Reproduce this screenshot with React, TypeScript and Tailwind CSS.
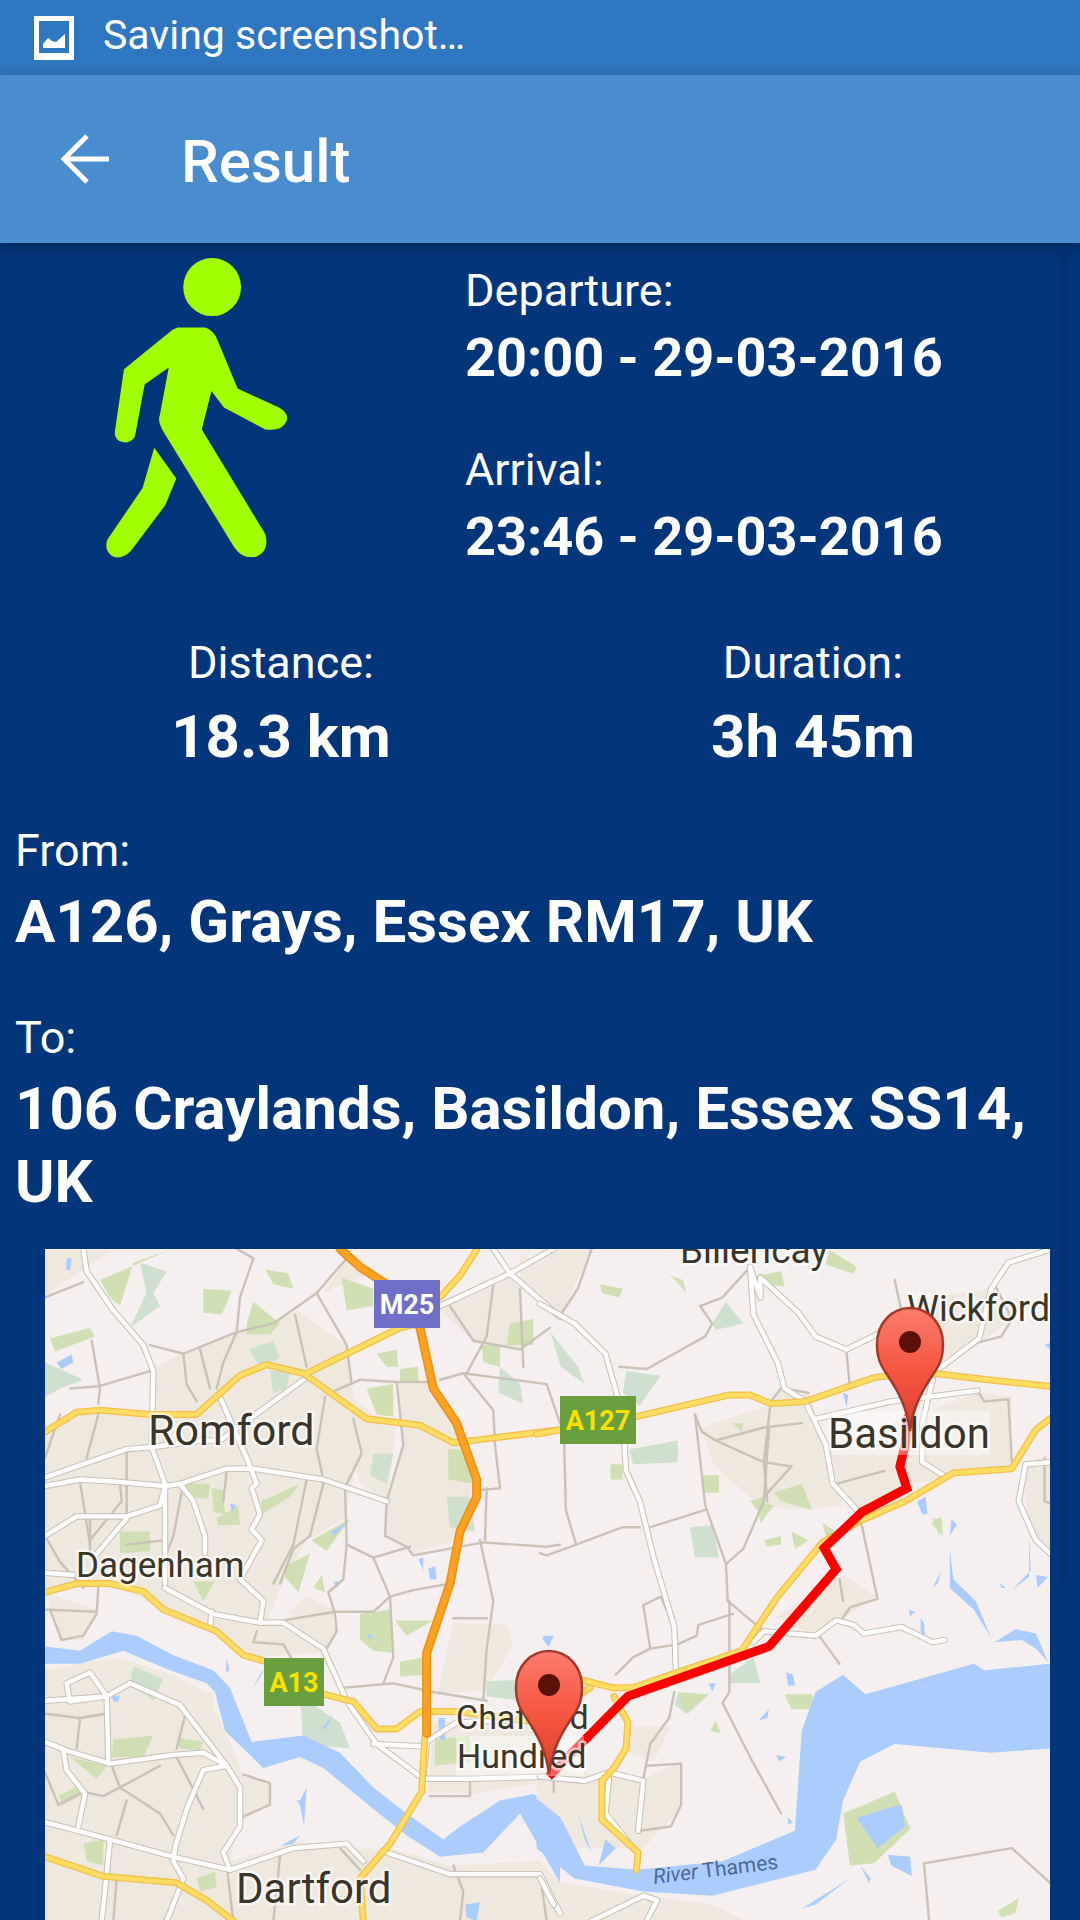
import React from "react";

const ROBOTO = { fontFamily: "Roboto, sans-serif" };

const A = "translate(40,1240) scale(0.33333,0.43368)";
const B = "translate(540,1240) scale(0.34439,0.43368)";

type Set = {
  tan: string[];
  pale: string[];
  green: string[];
  water: string[];
  minor: string[];
  white: string[];
  yellow: string[];
  orange: string[];
};

const setA: Set = {
  tan: [
    "15,125 220,20 15,20",
    "15,440 110,395 330,395 340,290 430,260 590,210 700,190 770,160 920,240 960,480 915,640 800,690 720,800 680,880 860,850 890,900 860,950 600,960 530,900 370,850 210,790 15,810",
    "15,990 230,960 400,1000 500,1040 560,1140 610,1230 690,1250 690,1300 600,1340 570,1430 770,1385 950,1400 1050,1400 1230,1440 1500,1430 1560,1480 1560,1568 15,1568",
    "1190,1045 1240,880 1400,885 1420,930 1340,1035",
    "1180,1110 1500,1100 1500,1250 1300,1275 1165,1270",
    "1035,680 1040,600 1090,470 1070,330 1170,330 1250,420 1300,560 1250,690 1120,720 1100,705",
    "1440,30 1560,80 1560,180 1440,110",
    "1200,160 1400,80 1440,110 1450,250 1300,230",
    "740,860 800,820 880,850 880,880",
    "385,1040 520,1040 520,1090 420,1080",
    "890,330 1000,400 1070,420 1040,600 960,560",
    "15,810 170,850 130,920 60,920",
    "930,30 1000,70 850,120",
  ],
  pale: [
    "300,50 380,70 340,120 360,150 270,200 320,120",
    "15,280 130,320 60,340 15,360",
    "625,250 700,230 720,270 660,290",
    "690,300 750,300 740,340 700,350",
    "1000,490 1060,490 1040,560 990,540",
    "1380,290 1440,330 1450,375 1375,350",
    "280,980 370,1010 340,1060 270,1020",
    "780,1050 900,1110 930,1170 790,1160",
    "1340,1015 1500,1010 1440,1060 1340,1050",
    "1220,590 1290,590 1305,670 1230,660",
  ],
  green: [
    "180,90 390,20 280,50 240,150 210,130",
    "30,225 150,200 165,220 45,255",
    "490,110 575,115 545,170 490,165",
    "620,190 640,140 720,190 690,215 620,215",
    "675,65 745,75 760,110 700,100",
    "905,85 1000,110 1000,150 920,160",
    "1010,260 1070,250 1075,290 1040,290",
    "980,340 1060,330 1060,405 1010,400",
    "1080,295 1135,290 1135,325 1080,325",
    "430,560 510,560 505,595 450,590",
    "515,570 550,575 555,630 520,625",
    "530,640 595,610 600,655 535,655",
    "665,600 780,560 750,590 665,630",
    "240,670 330,670 330,715 240,720",
    "460,785 525,785 490,830",
    "735,750 810,720 775,810 735,775",
    "820,800 845,770 855,810",
    "815,690 930,640 860,715",
    "960,860 1050,850 1060,950 1000,945 960,920",
    "1065,875 1180,875 1100,910",
    "1080,970 1150,960 1150,1000 1080,1005",
    "1185,1150 1290,1140 1290,1200 1185,1210",
    "1325,240 1380,240 1380,290 1330,280",
    "1225,480 1290,480 1300,560 1225,550",
    "1410,190 1480,180 1480,240 1400,240",
    "55,1280 105,1260 130,1275 70,1300",
    "130,1390 190,1380 190,1440 140,1430",
    "470,1470 525,1455 530,1490 480,1500",
    "90,1190 200,1210 170,1240",
    "220,1150 340,1140 310,1190 215,1190",
    "410,1145 490,1155 480,1175 420,1170",
  ],
  water: [
    "15,935 120,945 215,900 290,910 400,955 520,990 570,1030 635,1155 790,1140 900,1180 1000,1260 1100,1320 1210,1380 1260,1350 1380,1290 1480,1275 1560,1310 1560,1480 1500,1400 1440,1320 1330,1410 1200,1420 1100,1370 1000,1310 850,1215 780,1190 670,1215 555,1130 525,1040 500,1020 390,990 250,945 120,975 15,975",
    "80,40 95,40 90,68 78,65",
    "50,280 95,262 100,280 65,295",
    "570,605 590,610 575,625",
    "880,785 905,785 890,800",
    "875,670 930,645 880,680",
    "1135,735 1150,730 1150,760",
    "1165,755 1185,750 1190,780 1170,780",
    "980,905 1000,910 990,920",
    "1510,910 1540,910 1525,935",
    "1195,1100 1215,1100 1215,1150 1200,1150",
    "635,1035 670,985 665,1000",
    "560,960 568,990 558,995",
    "780,1290 800,1260 792,1350 780,1300 770,1290",
    "720,1395 780,1370 760,1390",
    "840,1130 880,1090 860,1120",
    "1275,1530 1320,1525 1310,1568 1280,1560",
    "215,1050 240,1048 235,1062 220,1062",
  ],
  minor: [
    "15,130 130,95",
    "330,240 430,260 590,210 700,190 830,120 920,40",
    "590,210 600,130 640,40 590,18",
    "430,260 440,330 470,370",
    "480,250 510,340",
    "590,210 550,280 530,340",
    "155,230 180,340 175,375",
    "90,340 175,335 330,300",
    "765,170 800,290",
    "830,120 920,240 935,330",
    "855,360 830,480 850,550",
    "885,345 960,320 1070,325 1170,325",
    "1070,325 1090,470 1040,600 1035,680 1100,705 1120,725 1330,695 1520,705 1560,700",
    "940,410 965,490 920,560",
    "800,550 760,700 700,790",
    "850,560 810,680 760,710 720,790",
    "915,570 920,700 1000,730 1110,705",
    "920,700 910,780 865,810 885,860 890,900 860,940",
    "1000,730 1050,820 1060,960 1030,1020",
    "885,855 1000,855 1050,820 1120,805 1230,790",
    "690,880 885,855",
    "1320,690 1360,830 1340,940 1330,1060",
    "1340,570 1335,690",
    "1310,575 1380,570 1365,470",
    "1340,870 1240,870",
    "910,1030 1060,1020 1180,1040 1340,1060",
    "1200,320 1270,305 1360,390 1365,470",
    "1230,150 1300,230 1440,250 1530,200",
    "1280,305 1340,220 1360,100",
    "1440,110 1450,290",
    "1270,305 1520,330 1560,420",
    "15,500 60,400",
    "140,500 175,400",
    "260,480 260,630",
    "120,555 150,700",
    "15,680 60,740 130,800",
    "15,850 170,855",
    "30,850 65,920 130,910 170,860 175,800",
    "15,1090 120,1100 200,1090",
    "120,1100 110,1170",
    "15,1225 55,1300 130,1270 190,1280 240,1260 360,1210",
    "215,1210 240,1260 360,1320",
    "260,1290 230,1370",
    "360,1320 400,1370",
    "610,1230 690,1250 690,1300 600,1330",
    "440,1080 410,1170",
    "410,1190 490,1310",
    "650,900 640,925 730,930 760,970",
    "1170,1280 1290,1280 1290,1240",
    "1240,1440 1270,1500 1260,1568",
    "1500,1460 1520,1568",
    "430,560 400,680 380,720",
    "150,640 150,720",
    "240,560 245,600 150,690",
    "260,700 375,690",
    "560,530 550,600",
    "560,1440 580,1568",
    "230,1470 220,1568",
    "700,1568 720,1420",
    "900,1400 960,1450",
  ],
  white: [
    "130,18 140,70 220,160 310,240 340,300 335,475 375,560 375,790",
    "15,545 260,480 340,475 480,460 540,460 790,320",
    "540,360 620,500 650,560 635,570 660,630 635,665 665,690 600,780 670,830 660,880",
    "15,565 120,550 230,555 375,565 420,560 560,525 640,525 850,550 1040,600",
    "420,560 460,600 495,680 495,720",
    "15,680 110,635 260,635 360,610 375,565",
    "160,730 260,640",
    "375,800 520,860 660,880 730,880 850,940 920,1060 1010,1160 1150,1240",
    "515,855 510,890",
    "15,1155 80,1175 210,1205 400,1185 490,1180 560,1210 600,1260 600,1350 550,1410 570,1450 760,1400 920,1390 970,1430",
    "15,1060 200,1050 270,1020 420,1070 560,1210",
    "200,1050 205,1200",
    "200,1050 90,1062 80,1020 150,995 200,1050",
    "70,1175 80,1220 135,1275 115,1350",
    "15,1340 210,1380 400,1420 570,1450",
    "560,1210 490,1220 440,1310 405,1400 400,1430 430,1470 380,1568",
    "210,1380 200,1460 185,1568",
    "1000,1160 1140,1165 1250,1110 1420,1105",
    "1160,1160 1150,1240 1290,1240 1530,1235",
    "1360,18 1410,75 1560,175",
    "1200,150 1410,75 1540,18",
    "1040,1410 1230,1460 1500,1460 1560,1550",
    "15,765 100,770",
  ],
  yellow: [
    "15,440 110,395 180,390 330,400 470,400 600,310 680,285 790,305 980,410 1140,425 1240,465 1320,458 1560,435",
    "800,305 1080,200 1140,190",
    "1200,130 1260,80 1310,20",
    "15,810 110,790 210,790 310,808 370,850 530,900 610,955 680,970",
    "850,1045 940,1062 1010,1125 1070,1125 1140,1085 1250,1085 1500,1110 1650,1030",
    "1155,1140 1145,1270 1050,1390 960,1470 970,1568",
    "15,1420 190,1465 410,1480 500,1520 580,1568",
  ],
  orange: [
    "900,18 960,60 1060,110 1140,200 1180,340 1250,420 1310,550 1310,590 1260,670 1230,790 1160,950 1160,1135",
  ],
};

const setB: Set = {
  tan: [
    "620,390 780,350 830,470 880,610 720,620 620,600 500,510 470,430",
    "830,470 1100,400 1270,350 1370,360 1370,520 1080,560 930,630 860,560",
    "1140,130 1300,110 1370,180 1270,240 1150,280",
    "-10,1215 300,1240 410,1200 410,1310 300,1400 100,1400 -10,1290",
    "680,870 880,770 980,820 900,860 800,910",
    "-10,1470 300,1510 500,1530 600,1568 -10,1568",
    "1400,520 1481,510 1481,720 1420,680",
    "0,20 150,20 60,170 0,130",
    "260,1120 380,1120 330,1200 260,1180",
    "690,340 760,340 730,390 680,380",
  ],
  pale: [
    "500,190 540,140 590,190 510,205",
    "30,210 110,290 130,330 60,290",
    "250,300 350,310 290,380 240,350",
    "435,660 500,655 520,730 450,730",
    "260,480 400,460 400,510 270,515",
    "1140,640 1165,640 1160,680",
    "550,1000 620,960 640,1020 550,1020",
    "0,1020 130,1010 100,1080 0,1060",
    "400,1045 490,1045 430,1090 390,1070",
  ],
  green: [
    "630,80 700,70 710,105 650,100",
    "175,100 240,110 230,130 180,120",
    "840,20 920,60 910,75 830,55",
    "205,515 240,515 240,550 205,550",
    "610,600 650,590 640,630",
    "650,690 700,680 700,700 660,705",
    "730,670 780,690 740,710",
    "820,650 860,670 830,680",
    "630,600 680,610 640,650",
    "710,1045 790,1045 800,1080 730,1080",
    "880,1320 1030,1270 1075,1355 970,1435 900,1440",
    "1135,650 1165,635 1170,680",
    "400,1040 490,1045 420,1090",
    "495,1130 510,1105 525,1135",
    "470,540 520,540 520,580 480,580",
    "560,420 590,420 585,440",
    "1330,1545 1390,1515 1380,1550 1340,1560",
    "380,80 415,90 425,120",
    "680,580 760,560 790,620 700,600",
  ],
  water: [
    "-10,1285 60,1330 130,1440 280,1450 530,1430 740,1360 760,1130 800,1040 880,1000 945,1045 1260,975 1290,990 1481,975 1481,1170 1310,1180 1030,1160 930,1200 880,1290 860,1380 800,1450 500,1510 300,1500 100,1470 -10,1400",
    "5,915 40,910 25,935",
    "715,995 735,1000 740,1025 720,1025",
    "635,1105 665,1080 660,1100",
    "685,1185 715,1190 695,1200",
    "490,1020 510,1020 500,1040",
    "1095,600 1120,590 1125,630 1110,630",
    "880,350 895,355 890,385",
    "1190,710 1200,780 1265,830 1310,915 1260,850 1190,800",
    "1140,800 1165,760 1155,790",
    "1070,850 1090,855 1075,865",
    "1105,870 1115,880 1118,915 1105,900",
    "1320,925 1380,895 1440,905 1475,970 1440,940 1400,920",
    "1335,790 1355,800 1340,800",
    "1370,805 1420,775 1420,680 1425,760",
    "1195,640 1210,655 1190,680",
    "110,1320 150,1410 130,1380",
    "190,1380 220,1400 170,1440",
    "930,1440 960,1470 955,1480",
    "1010,1415 1075,1420 1080,1465 1020,1440",
    "920,1330 1000,1310 1050,1300 1060,1350 980,1400",
    "760,1540 900,1470 800,1530",
    "1440,770 1475,775 1445,800",
    "1465,240 1481,235 1481,250",
    "720,1330 735,1340 720,1345",
  ],
  minor: [
    "150,18 110,110 60,170",
    "465,150 500,190 480,220 310,295 230,290",
    "610,60 530,130 465,150",
    "450,400 470,440 510,460 650,430 760,420",
    "510,460 650,510 730,520",
    "450,400 480,610 540,745 545,830",
    "320,660 480,620",
    "70,460 75,620 105,700 20,725 0,720",
    "105,700 240,660 290,660",
    "540,745 590,710 650,600 665,430",
    "545,830 650,900",
    "550,830 550,1040 530,1065 610,1190 700,1320",
    "300,840 350,820 390,890",
    "300,840 320,940 270,960 220,1000",
    "320,940 400,930 455,910 460,885 560,860",
    "390,1040 375,1100 320,1160 300,1240",
    "310,1210 410,1205 410,1300 380,1350 290,1360",
    "930,640 980,825 900,845 870,880",
    "870,780 880,830",
    "810,910 870,975",
    "1030,90 1060,200",
    "890,255 900,340",
    "1130,1568 1115,1435 1370,1400 1481,1480",
    "780,350 700,340 670,370 650,510 660,600",
    "860,560 1000,530",
    "1270,345 1290,370 1360,365 1370,510",
    "1320,100 1370,180 1340,220 1270,235",
    "1465,500 1465,600 1481,605",
    "730,520 650,590",
    "40,1230 40,1270",
  ],
  white: [
    "0,145 100,190 190,260 240,400 250,530 290,600 330,730 390,890 395,1000",
    "610,60 620,170 690,280 710,340 770,370 830,470 850,560 920,620",
    "640,85 750,165 800,220 890,250 980,215 1150,300 1275,225 1310,110 1360,50 1481,20",
    "800,410 1020,370 1270,345",
    "1140,320 1110,420 1110,510 1170,540",
    "620,925 650,900 800,910 860,875 910,885 940,905 1050,890 1140,925 1175,920",
    "0,1235 130,1245 200,1225 300,1245 285,1360",
    "200,1240 190,1320 270,1400",
    "1481,510 1410,515 1390,600 1440,690 1481,720",
    "0,1470 40,1530",
    "300,1510 340,1520 310,1568",
    "300,1510 150,1568",
    "610,60 640,130 640,85",
  ],
  yellow: [
    "-10,445 280,405 550,355 610,355 670,375 770,370 970,315 1020,310",
    "1140,305 1300,320 1481,335",
    "110,1010 210,1030 270,1030 380,1000 585,945 690,820 820,695 930,645 1060,600 1200,535 1370,525 1440,435 1481,410",
    "215,1050 255,1110 250,1170 215,1215 180,1245 180,1335 285,1410 280,1450",
  ],
  orange: [],
};

function Lines({ pts, stroke, width }: { pts: string[]; stroke: string; width: number }) {
  return (
    <>
      {pts.map((p) => (
        <polyline
          key={p}
          points={p}
          fill="none"
          stroke={stroke}
          strokeWidth={width}
          strokeLinejoin="round"
          strokeLinecap="round"
          vectorEffect="non-scaling-stroke"
        />
      ))}
    </>
  );
}

function Areas({ pts, fill, opacity = 1 }: { pts: string[]; fill: string; opacity?: number }) {
  return (
    <>
      {pts.map((p) => (
        <polygon key={p} points={p} fill={fill} opacity={opacity} />
      ))}
    </>
  );
}

function MapLayer({ set, t, layer }: { set: Set; t: string; layer: "areas" | "roads" }) {
  if (layer === "areas") {
    return (
      <g transform={t}>
        <Areas pts={set.tan} fill="#efe8df" />
        <Areas pts={set.pale} fill="#cfe0cf" />
        <Areas pts={set.green} fill="#d0e0b2" />
        <Areas pts={set.water} fill="#abcdfe" />
      </g>
    );
  }
  return (
    <g transform={t}>
      <Lines pts={set.minor} stroke="#c9c2b6" width={2.4} />
      <Lines pts={set.white} stroke="#c9c2b6" width={6.5} />
      <Lines pts={set.white} stroke="#ffffff" width={4.4} />
      <Lines pts={set.yellow} stroke="#f4bf4c" width={7} />
      <Lines pts={set.yellow} stroke="#fddd62" width={4.4} />
      <Lines pts={set.orange} stroke="#ed8f10" width={9} />
      <Lines pts={set.orange} stroke="#fba222" width={6} />
    </g>
  );
}

function Pin({ x, y, id }: { x: number; y: number; id: string }) {
  return (
    <g transform={`translate(${x},${y})`}>
      <path
        d="M0,0 C-3,-24 -12,-40 -22,-55 C-29,-65 -33,-72 -33,-87 C-33,-108 -18,-123 0,-123 C18,-123 33,-108 33,-87 C33,-72 29,-65 22,-55 C12,-40 3,-24 0,0 Z"
        fill={`url(#${id})`}
        stroke="#a23a2b"
        strokeWidth="2.5"
      />
      <ellipse cx="0" cy="-89" rx="11" ry="11" fill="#5a1208" />
    </g>
  );
}

function Shield({ x, y, w, h, bg, fg, label }: { x: number; y: number; w: number; h: number; bg: string; fg: string; label: string }) {
  return (
    <g>
      <rect x={x} y={y} width={w} height={h} fill={bg} />
      <text x={x + w / 2} y={y + h / 2 + 10} textAnchor="middle" fontFamily="Roboto, sans-serif" fontWeight="700" fontSize="27" fill={fg}>
        {label}
      </text>
    </g>
  );
}

function Place({ x, y, size, children }: { x: number; y: number; size: number; children: string }) {
  return (
    <text
      x={x}
      y={y}
      fontFamily="Roboto, sans-serif"
      fontSize={size}
      fill="#3a3529"
      stroke="#ffffff"
      strokeOpacity="0.65"
      strokeWidth="5"
      strokeLinejoin="round"
      style={{ paintOrder: "stroke" }}
    >
      {children}
    </text>
  );
}

function MapArt() {
  return (
    <svg className="block w-full h-full" viewBox="45 1248 1005 672" preserveAspectRatio="none">
      <defs>
        <linearGradient id="pinA" x1="0" y1="0" x2="0" y2="1">
          <stop offset="0" stopColor="#fc7c6d" />
          <stop offset="0.55" stopColor="#f4533f" />
          <stop offset="1" stopColor="#d8402f" />
        </linearGradient>
        <linearGradient id="pinB" x1="0" y1="0" x2="0" y2="1">
          <stop offset="0" stopColor="#fc7c6d" />
          <stop offset="0.55" stopColor="#f4533f" />
          <stop offset="1" stopColor="#d8402f" />
        </linearGradient>
      </defs>
      <rect x="45" y="1248" width="1005" height="672" fill="#f5f0ef" />
      <MapLayer set={setA} t={A} layer="areas" />
      <MapLayer set={setB} t={B} layer="areas" />
      <MapLayer set={setA} t={A} layer="roads" />
      <MapLayer set={setB} t={B} layer="roads" />
      <g transform={B}>
        <polyline
          points="25,1235 255,1050 665,935 860,757 825,708 935,625 1065,570 1045,520 1060,470 1070,400"
          fill="none"
          stroke="#ff0000"
          strokeWidth="9"
          strokeLinejoin="miter"
          vectorEffect="non-scaling-stroke"
        />
      </g>
      <rect x="832" y="1410" width="158" height="44" fill="#ffffff" opacity="0.38" />
      <rect x="456" y="1735" width="128" height="40" fill="#ffffff" opacity="0.38" />
      <Place x={148} y={1444} size={43}>Romford</Place>
      <Place x={76} y={1576} size={35}>Dagenham</Place>
      <Place x={456} y={1728} size={34}>Chafford</Place>
      <Place x={457} y={1767} size={34}>Hundred</Place>
      <Place x={236} y={1902} size={42}>Dartford</Place>
      <Place x={680} y={1262} size={37}>Billericay</Place>
      <Place x={907} y={1320} size={36}>Wickford</Place>
      <Place x={828} y={1447} size={42}>Basildon</Place>
      <text transform="translate(654,1883) rotate(-7)" fontFamily="Roboto, sans-serif" fontSize="21" fill="#48689a">
        <tspan fontStyle="italic">River</tspan> Thames
      </text>
      <Shield x={374} y={1279} w={66} h={48} bg="#6f6fc8" fg="#ffffff" label="M25" />
      <Shield x={264} y={1657} w={60} h={48} bg="#6a9f3f" fg="#fbe100" label="A13" />
      <Shield x={560} y={1395} w={76} h={48} bg="#6a9f3f" fg="#fbe100" label="A127" />
      <Pin x={549} y={1773} id="pinA" />
      <Pin x={910} y={1430} id="pinB" />
    </svg>
  );
}

function Walker() {
  return (
    <svg className="block w-[190px] h-[305px] ml-[100px]" viewBox="100 255 190 305">
      <g transform="scale(0.6888,0.3827)" fill="#a2ff00">
        <ellipse cx="308" cy="750" rx="42" ry="76" />
        <path d="M258,856 L298,856 Q310,862 316,890 L345,1015 L405,1065 Q420,1080 416,1100 Q410,1128 385,1122 L325,1065 L307,1022 L293,1122 L385,1395 Q392,1440 372,1455 Q352,1462 340,1430 L238,1130 Q228,1100 232,1085 L245,960 L210,1005 L196,1140 Q190,1160 178,1155 Q165,1150 167,1125 L180,965 L250,862 Z" />
        <path d="M224,1170 L256,1250 L240,1320 L190,1440 Q178,1462 165,1455 Q150,1440 156,1410 L207,1275 Z" />
      </g>
    </svg>
  );
}

function Label({ children }: { children: React.ReactNode }) {
  return <div className="text-[45px] leading-[58px] text-white">{children}</div>;
}

function DateValue({ children }: { children: React.ReactNode }) {
  return <div className="text-[54px] leading-[76px] font-bold text-white">{children}</div>;
}

function Value({ children }: { children: React.ReactNode }) {
  return <div className="mt-[8px] text-[60px] leading-[73px] font-bold text-white">{children}</div>;
}

function PlaceValue({ children }: { children: React.ReactNode }) {
  return <div className="mt-[5px] text-[60px] leading-[73px] font-bold text-white">{children}</div>;
}

export default function App() {
  return (
    <div className="relative w-[1080px] h-[1920px] overflow-hidden bg-[#03357a]" style={ROBOTO}>
      <div className="flex items-center h-[75px] bg-[#2f78c1] pl-[34px]">
        <svg className="w-[40px] h-[44px] shrink-0" viewBox="0 0 40 44">
          <path fillRule="evenodd" fill="#ffffff" d="M0,0 H40 V44 H0 Z M5,5 V37 H35 V5 Z" />
          <path fill="#ffffff" d="M9,32 V28 L14,22 L18,25 L22,26 L31,18 V32 Z" />
        </svg>
        <div className="ml-[29px] pb-[6px] text-[41px] leading-[66px] text-white">Saving screenshot…</div>
      </div>
      <div className="relative z-10 flex items-center h-[168px] bg-[#4a8dcf] shadow-[0_3px_14px_rgba(0,0,0,0.35)] pl-[60px]">
        <svg className="w-[50px] h-[50px] shrink-0" viewBox="0 0 50 50">
          <path d="M3,25 H49 M27,2 L4,25 L27,48" fill="none" stroke="#ffffff" strokeWidth="5" />
        </svg>
        <div className="ml-[71px] pt-[5px] text-[60px] leading-[70px] font-medium text-white">Result</div>
      </div>

      <div className="flex h-[331px]">
        <div className="w-[465px] pt-[12px]">
          <Walker />
        </div>
        <div className="pt-[19px]">
          <Label>Departure:</Label>
          <DateValue>20:00 - 29-03-2016</DateValue>
          <div className="mt-[45px]">
            <Label>Arrival:</Label>
          </div>
          <DateValue>23:46 - 29-03-2016</DateValue>
        </div>
      </div>

      <div className="flex mt-[60px]">
        <div className="w-[562px] text-center">
          <Label>Distance:</Label>
          <Value>18.3 km</Value>
        </div>
        <div className="w-[502px] text-center">
          <Label>Duration:</Label>
          <Value>3h 45m</Value>
        </div>
      </div>

      <div className="px-[15px] mt-[49px]">
        <Label>From:</Label>
        <PlaceValue>A126, Grays, Essex RM17, UK</PlaceValue>
        <div className="mt-[51px]">
          <Label>To:</Label>
        </div>
        <PlaceValue>106 Craylands, Basildon, Essex SS14, UK</PlaceValue>
      </div>

      <div className="ml-[45px] mt-[31px] w-[1005px] h-[672px]">
        <MapArt />
      </div>

      <div className="absolute right-[10px] top-[253px] w-[10px] h-[1330px] bg-black/[0.05]" />
    </div>
  );
}
